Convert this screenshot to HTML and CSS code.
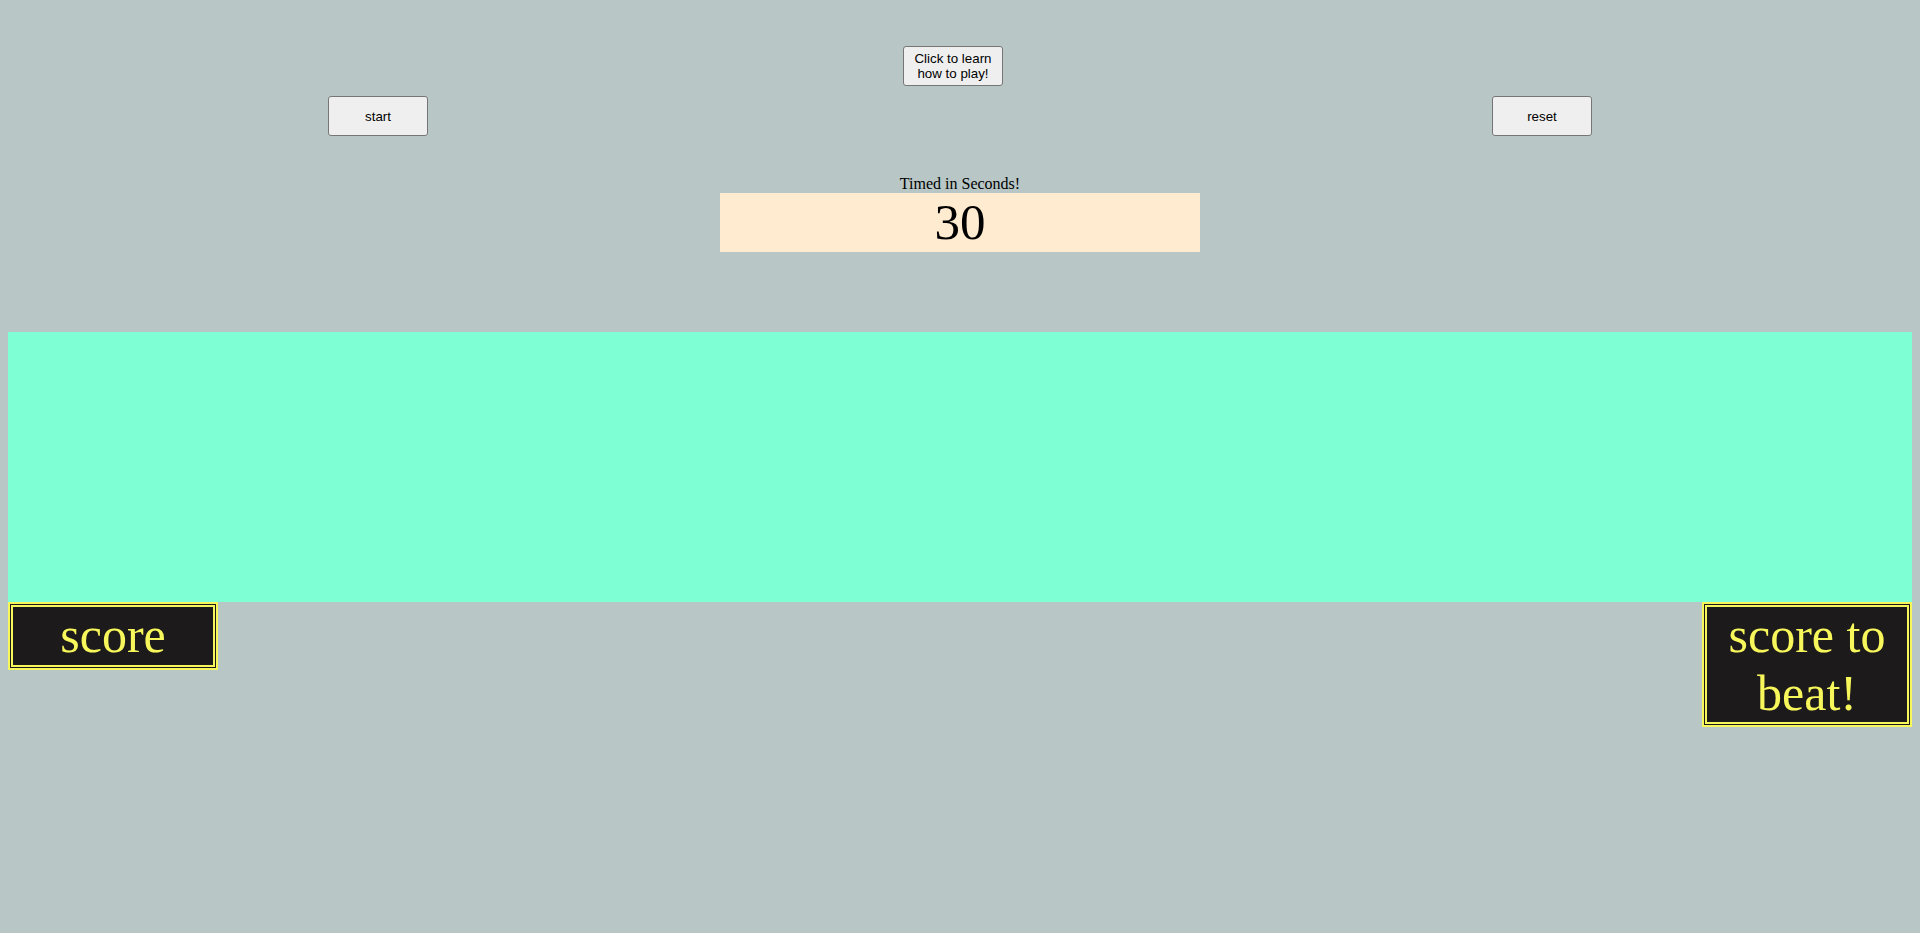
FILE: index.html
```html
<!DOCTYPE html>
<html>
<head>
<meta charset="utf-8">
<title>Game</title>
<link rel="stylesheet" href="styles.css">
</head>
<body>
<header class="controls">
  <div class="help-row">
    <button class="btn">Click to learn how to play!</button>
  </div>
  <div class="action-row">
    <button class="btn">start</button>
    <button class="btn">reset</button>
  </div>
</header>
<section class="timer">
  <div class="timer-label">Timed in Seconds!</div>
  <div class="timer-box">30</div>
</section>
<main class="board"></main>
<footer class="scores">
  <div class="score-box">score</div>
  <div class="score-box">score to beat!</div>
</footer>
</body>
</html>
```

FILE: styles.css
```css
html, body {
  background: #b8c6c6;
}
body {
  margin: 8px;
  font-family: "Liberation Serif", "Times New Roman", serif;
  color: #000;
}
.controls {
  padding-top: 38px;
}
.help-row {
  display: flex;
  justify-content: center;
  padding-right: 14px;
}
.btn {
  width: 100px;
  height: 40px;
  font-family: "Liberation Sans", Arial, sans-serif;
  font-size: 13.333px;
  line-height: 15px;
  color: #000;
  background: #efefef;
  border: 1px solid #767676;
  border-radius: 3px;
  padding: 1px 6px;
  margin: 0;
}
.action-row {
  display: flex;
  justify-content: space-between;
  padding: 0 320px;
  margin-top: 10px;
}
.timer {
  display: flex;
  flex-direction: column;
  align-items: center;
  margin-top: 39px;
}
.timer-label {
  font-size: 16px;
  line-height: 18px;
}
.timer-box {
  width: 480px;
  height: 59px;
  background: #ffebcf;
  font-size: 51px;
  line-height: 59px;
  text-align: center;
}
.board {
  margin-top: 80px;
  height: 270px;
  background: #7fffd4;
}
.scores {
  display: flex;
  justify-content: space-between;
  align-items: flex-start;
}
.score-box {
  width: 200px;
  box-sizing: content-box;
  background: #1c1a1a;
  border: 5px double #f7f75c;
  color: #f7f75c;
  font-size: 50px;
  line-height: 57.5px;
  text-align: center;
}
```
